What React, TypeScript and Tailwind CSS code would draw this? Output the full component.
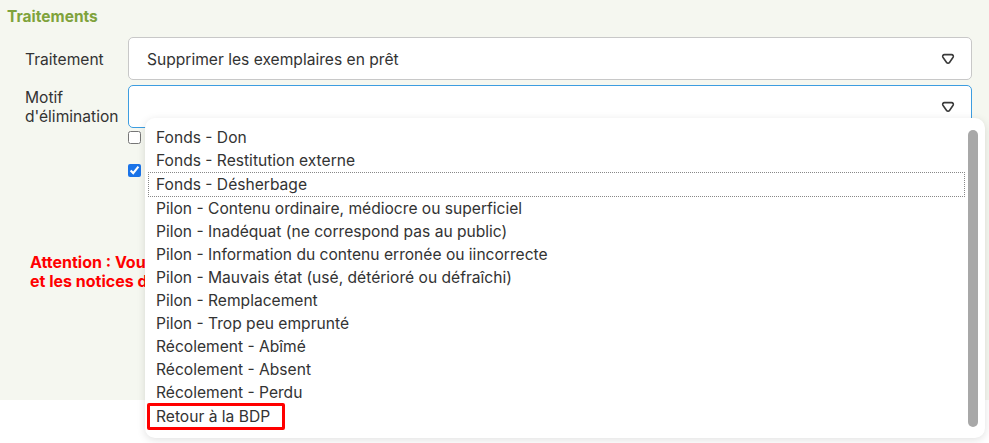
import React from 'react';

const options = [
  'Fonds - Don',
  'Fonds - Restitution externe',
  'Fonds - Désherbage',
  'Pilon - Contenu ordinaire, médiocre ou superficiel',
  'Pilon - Inadéquat (ne correspond pas au public)',
  'Pilon - Information du contenu erronée ou iincorrecte',
  'Pilon - Mauvais état (usé, détérioré ou défraîchi)',
  'Pilon - Remplacement',
  'Pilon - Trop peu emprunté',
  'Récolement - Abîmé',
  'Récolement - Absent',
  'Récolement - Perdu',
  'Retour à la BDP',
];

const Arrow = () => (
  <svg width="14" height="12" viewBox="0 0 14 12" fill="none">
    <path
      d="M3.4 1.6h7.2c1.4 0 2.2 1.5 1.5 2.6L8.5 9.5c-.7 1-2.2 1-2.9 0L1.9 4.2c-.7-1.1.1-2.6 1.5-2.6z"
      stroke="#3a3a3a"
      strokeWidth="1.6"
      strokeLinejoin="round"
    />
  </svg>
);

const App: React.FC = () => {
  return (
    <div
      className="relative w-[989px] h-[443px] overflow-hidden bg-white text-[#333]"
      style={{ fontFamily: 'Inter, "Noto Sans", sans-serif' }}
    >
      <div className="h-[400px] bg-[#f5f7f0] pt-[6px]">
        <h2 className="pl-[7px] text-[15.5px] font-bold leading-[22px] text-[#7fa33c]">Traitements</h2>
        <div className="mt-[9px] flex flex-col gap-[5px] pl-[25px] pr-[17px]">
          <div className="flex items-center">
            <span className="mt-[3px] w-[103px] text-[15.6px]">Traitement</span>
            <div className="flex h-[43px] flex-1 items-center justify-between rounded-[5px] border border-[#c8c8c8] bg-white pl-[18px] pr-[16px]">
              <span className="mt-[3px] text-[15.6px]">Supprimer les exemplaires en prêt</span>
              <Arrow />
            </div>
          </div>
          <div className="flex items-center">
            <span className="w-[103px] text-[15.6px] leading-[19px]">
              Motif
              <br />
              d'élimination
            </span>
            <div className="flex h-[43px] flex-1 items-center justify-end rounded-[5px] border border-[#3d9de0] bg-white pr-[16px]">
              <Arrow />
            </div>
          </div>
          <div className="ml-[103px] mt-[-2px] flex flex-col gap-[20px]">
            <input type="checkbox" className="h-[13px] w-[13px] accent-[#1a73e8]" readOnly />
            <input type="checkbox" className="h-[13px] w-[13px] accent-[#1a73e8]" checked readOnly />
          </div>
        </div>
        <p className="mt-[76px] pl-[30px] text-[16px] font-bold leading-[19px] text-[#ff0000]">
          Attention : Vous allez supprimer définitivement les exemplaires
          <br />
          et les notices devenues sans exemplaire
        </p>
      </div>

      <div className="absolute left-[145px] top-[118px] h-[320px] w-[840px] rounded-[10px] bg-white shadow-[0_2px_8px_rgba(0,0,0,0.12)]">
        <ul className="pt-[8px] pl-[3px] pr-[20px]">
          {options.map((o, i) => (
            <li
              key={o}
              className={
                i === 2
                  ? 'border border-dotted border-[#888] pl-[7px] text-[15.6px] leading-[23px] text-[#333]'
                  : i === 12
                    ? 'ml-[-1px] mt-[-1px] inline-block rounded-[2px] border-[3px] border-[#ff0000] pl-[6px] pr-[12px] text-[15.6px] leading-[21px] text-[#333]'
                    : 'pl-[8px] text-[15.6px] leading-[23px] text-[#333]'
              }
            >
              {o}
            </li>
          ))}
        </ul>
        <div className="absolute right-[7px] top-[12px] h-[297px] w-[10px] rounded-full bg-[#a8a8a8]" />
      </div>
    </div>
  );
};

export default App;
